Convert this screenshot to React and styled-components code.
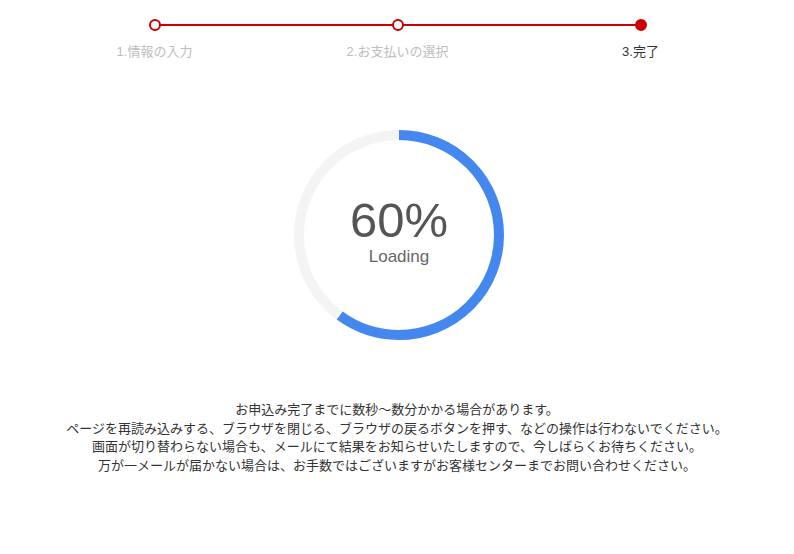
import React from "react";
import styled, { createGlobalStyle } from "styled-components";

const Global = createGlobalStyle`
  html, body { margin: 0; padding: 0; background: #fff; }
  body { font-family: "Liberation Sans", "Noto Sans CJK JP", sans-serif; color: #333; }
`;

const Page = styled.div`
  width: 794px;
  display: flex;
  flex-direction: column;
  align-items: center;
  padding-top: 19px;
`;

const Steps = styled.ol`
  list-style: none;
  margin: 0 0 0 1px;
  padding: 0;
  display: grid;
  grid-template-columns: repeat(3, 243px);
`;

const Step = styled.li`
  position: relative;
  display: flex;
  flex-direction: column;
  align-items: center;
  gap: 13px;
  &::before {
    content: "";
    position: absolute;
    top: 5px;
    height: 2px;
    background: #cc0000;
    left: ${(p) => (p.$first ? "50%" : "0")};
    right: ${(p) => (p.$last ? "50%" : "0")};
  }
`;

const Dot = styled.span`
  position: relative;
  z-index: 1;
  width: 12px;
  height: 12px;
  box-sizing: border-box;
  border-radius: 50%;
  border: 2px solid #cc0000;
  background: ${(p) => (p.$filled ? "#cc0000" : "#fff")};
`;

const Label = styled.span`
  font-size: 13px;
  line-height: 16px;
  color: ${(p) => (p.$active ? "#333" : "#bdbdbd")};
`;

const Ring = styled.div`
  position: relative;
  margin: 70px 0 0 4px;
  width: 210px;
  height: 210px;
  display: flex;
  flex-direction: column;
  align-items: center;
  justify-content: center;
  svg { position: absolute; inset: 0; }
`;

const Percent = styled.div`
  position: relative;
  font-size: 49px;
  line-height: 50px;
  color: #555;
  margin-top: -8px;
`;

const Sub = styled.div`
  position: relative;
  font-size: 17px;
  line-height: 20px;
  color: #666;
  margin-top: 2px;
`;

const Notes = styled.div`
  margin-top: 61px;
  text-align: center;
  font-size: 13px;
  line-height: 18.7px;
  color: #333;
`;

const steps = ["1.情報の入力", "2.お支払いの選択", "3.完了"];

export default function App() {
  const pct = 60;
  const r = 100;
  const c = 2 * Math.PI * r;
  return (
    <Page>
      <Global />
      <Steps>
        {steps.map((s, i) => (
          <Step key={s} $first={i === 0} $last={i === steps.length - 1}>
            <Dot $filled={i === 2} />
            <Label $active={i === 2}>{s}</Label>
          </Step>
        ))}
      </Steps>
      <Ring>
        <svg width="210" height="210" viewBox="0 0 210 210">
          <circle cx="105" cy="105" r={r} fill="none" stroke="#f4f4f4" strokeWidth="10" />
          <circle
            cx="105"
            cy="105"
            r={r}
            fill="none"
            stroke="#4487ee"
            strokeWidth="10"
            strokeDasharray={`${(c * pct) / 100} ${c}`}
            transform="rotate(-90 105 105)"
          />
        </svg>
        <Percent>{pct}%</Percent>
        <Sub>Loading</Sub>
      </Ring>
      <Notes>
        お申込み完了までに数秒〜数分かかる場合があります。
        <br />
        ページを再読み込みする、ブラウザを閉じる、ブラウザの戻るボタンを押す、などの操作は行わないでください。
        <br />
        画面が切り替わらない場合も、メールにて結果をお知らせいたしますので、今しばらくお待ちください。
        <br />
        万が一メールが届かない場合は、お手数ではございますがお客様センターまでお問い合わせください。
      </Notes>
    </Page>
  );
}
